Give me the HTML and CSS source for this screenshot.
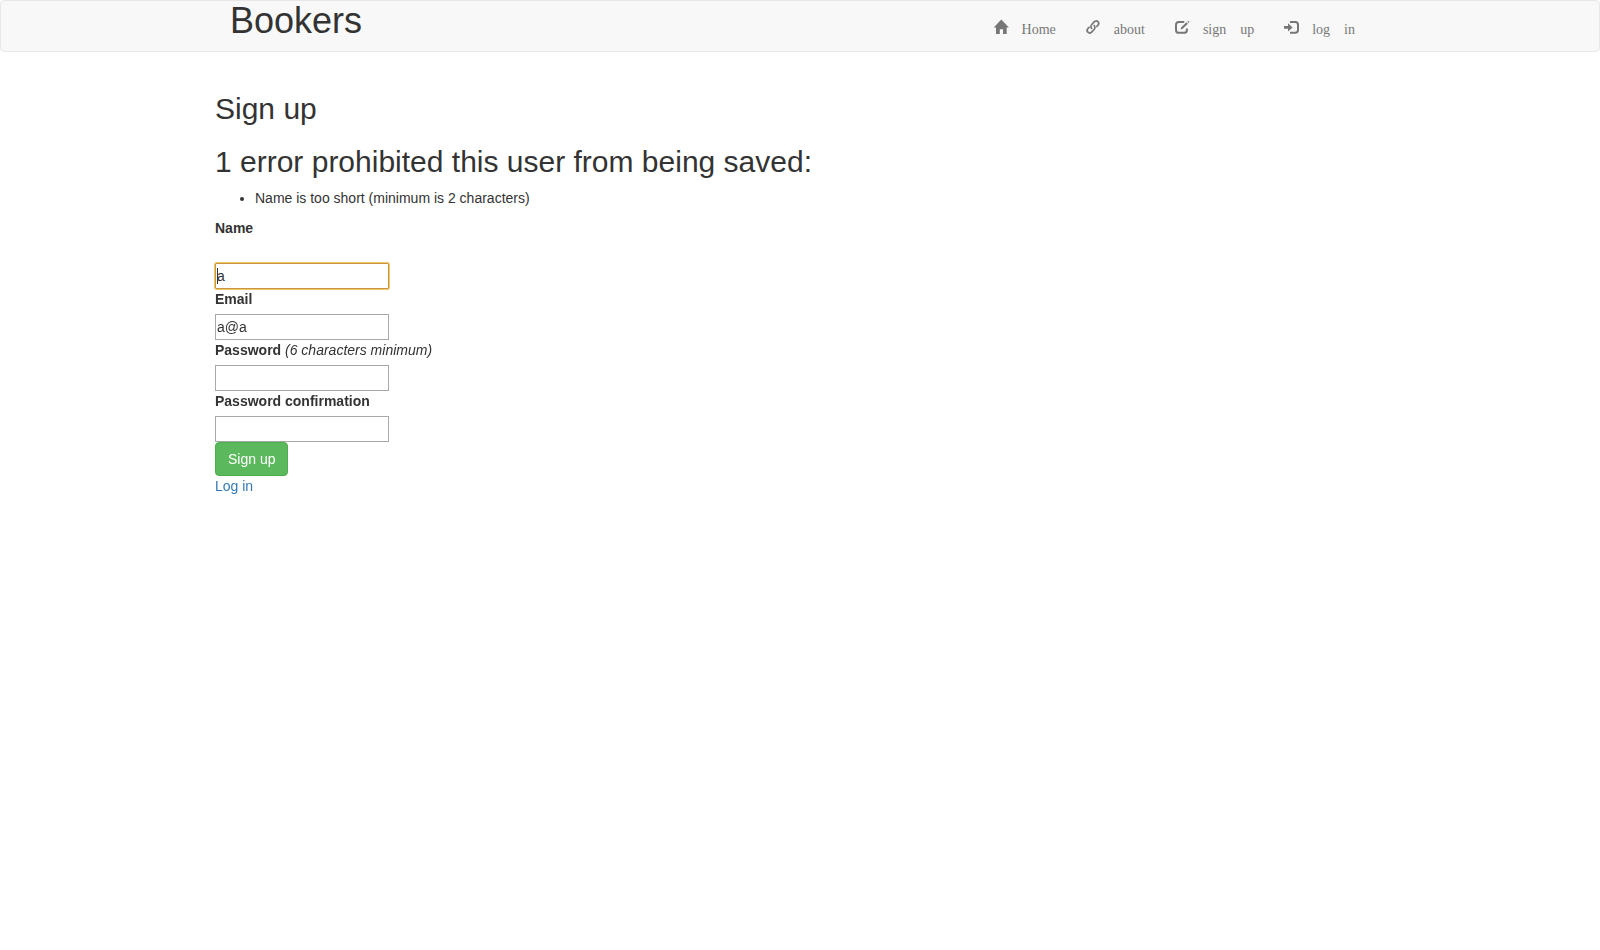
FILE: index.html
```html
<!DOCTYPE html>
<html lang="en">
<head>
<meta charset="utf-8">
<title>Bookers</title>
<link rel="stylesheet" href="styles.css">
</head>
<body>
<header class="navbar">
  <div class="container navbar-inner">
    <h1 class="brand">Bookers</h1>
    <nav>
      <ul class="nav">
        <li><a class="nav-link" href="#"><svg class="icon" viewBox="0 0 14 14" aria-hidden="true"><path d="M7.3 -.4L14.9 7.4H12.7V14H9V9.2H5.8V14H2V7.4H-.3Z"/></svg><span>Home</span></a></li>
        <li><a class="nav-link" href="#"><svg class="icon icon-link" viewBox="0 0 14 14" aria-hidden="true"><path d="M6.1 8.9C4.5 7.7 4.6 5.7 5.8 4.5L8.2 1.9C9.3.7 10.9.7 11.9 1.7C13 2.8 12.9 4.3 11.9 5.4L10.3 7"/><path d="M7.7 5.2C9.2 6.4 9.3 8.2 8.1 9.5L5.6 12.1C4.5 13.2 3 13.2 1.9 12.2C.9 11.1.9 9.6 1.9 8.5L3.5 6.9"/></svg><span>about</span></a></li>
        <li><a class="nav-link" href="#"><svg class="icon" viewBox="0 0 14 14" aria-hidden="true"><path class="line" d="M9.3 2H3.9Q1 2 1 4.9V9.9Q1 12.8 3.9 12.8H9Q11.9 12.8 11.9 9.9V8.4"/><path d="M11.5 2.3L12.9 3.7L7.8 8.8L5.5 9.6L6.3 7.3ZM13.1.8L14.5 2.1L13.8 2.9L12.4 1.5Z"/></svg><span>sign</span><span>up</span></a></li>
        <li><a class="nav-link" href="#"><svg class="icon" viewBox="0 0 14 14" aria-hidden="true"><path class="line" d="M6 2H11.3Q14 2 14 4.7V10.1Q14 12.8 11.3 12.8H6"/><path d="M0 5.9H4V3.3L8.6 7.4L4 11.5V8.8H0Z"/></svg><span>log</span><span>in</span></a></li>
      </ul>
    </nav>
  </div>
</header>
<main class="container">
  <h2>Sign up</h2>
  <form>
    <h2>1 error prohibited this user from being saved:</h2>
    <ul class="errors">
      <li>Name is too short (minimum is 2 characters)</li>
    </ul>
    <div class="field field-spaced">
      <label for="name">Name</label>
      <input class="text-input" id="name" type="text" value="a" autofocus>
    </div>
    <div class="field">
      <label for="email">Email</label>
      <input class="text-input" id="email" type="text" value="a@a">
    </div>
    <div class="field">
      <div><label for="password">Password</label> <em>(6 characters minimum)</em></div>
      <input class="text-input" id="password" type="password">
    </div>
    <div class="field">
      <label for="confirmation">Password confirmation</label>
      <input class="text-input" id="confirmation" type="password">
    </div>
    <button class="btn" type="submit">Sign up</button>
  </form>
  <a class="link" href="#">Log in</a>
</main>
<script src="main.js"></script>
</body>
</html>
```
FILE: main.js
```js
const nameInput = document.getElementById('name');
nameInput.focus();
nameInput.setSelectionRange(0, 0);
```
FILE: styles.css
```css
* { box-sizing: border-box; }
body {
  margin: 0;
  font: 14px/20px "Liberation Sans", Arial, sans-serif;
  color: #333;
  background: #fff;
}
.container { max-width: 1170px; margin: 0 auto; }
.navbar {
  min-height: 52px;
  margin-bottom: 40px;
  background: #f8f8f8;
  border: 1px solid #e7e7e7;
  border-radius: 4px;
}
.navbar-inner {
  display: flex;
  justify-content: space-between;
  align-items: flex-start;
  padding: 0 15px;
}
.brand { margin: 0; font-size: 36px; line-height: 40px; font-weight: 500; }
.nav { display: flex; margin: 0; padding: 0; list-style: none; }
.nav-link {
  display: flex;
  gap: 14px;
  padding: 19px 15px 11px;
  font-family: "Liberation Serif", serif;
  color: #777;
  text-decoration: none;
}
.icon { width: 14px; height: 14px; overflow: visible; fill: currentColor; }
.icon-link, .line { fill: none; stroke: currentColor; stroke-width: 2; }
.icon-link { stroke-width: 1.7; }
h2 { margin: 20px 0 10px; font-size: 30px; line-height: 33px; font-weight: 500; }
.errors { margin: 0 0 10px; padding-left: 40px; }
.field { display: flex; flex-direction: column; align-items: flex-start; gap: 5px; }
.field-spaced { gap: 25px; }
label { font-weight: 700; }
.text-input {
  width: 174px;
  height: 26px;
  padding: 1px;
  border: 1px solid #a9a9a9;
  font: inherit;
  color: inherit;
  background: #fff;
}
/* Steady, non-blinking caret at the start of the focused box */
.text-input:focus {
  border-color: #c8963e;
  outline: 1px solid #f0c66f;
  border-radius: 1px;
  caret-color: transparent;
  background: linear-gradient(#333, #333) 1px 4px / 1px 16px no-repeat #fff;
}
.btn {
  display: block;
  padding: 6px 12px;
  border: 1px solid #4cae4c;
  border-radius: 4px;
  font: inherit;
  color: #fff;
  background: #5cb85c;
}
.link { color: #337ab7; text-decoration: none; }
```
